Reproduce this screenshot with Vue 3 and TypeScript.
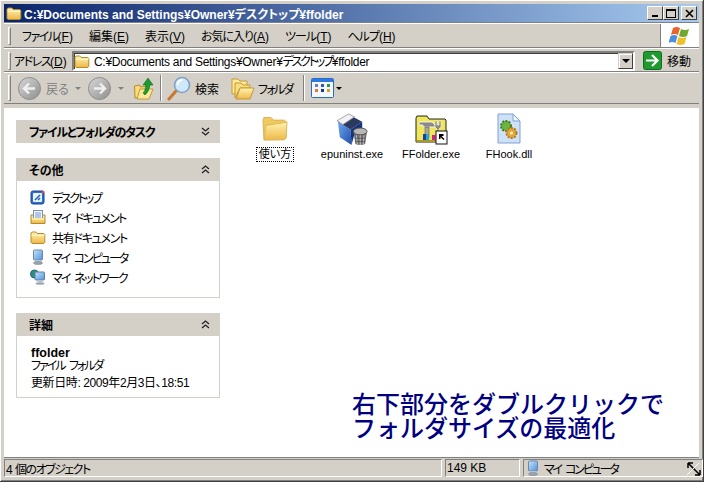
<script setup lang="ts">
interface Mnemonic {
  label: string
  key: string
  kana: boolean
}

const menus: Mnemonic[] = [
  { label: 'ファイル', key: 'F', kana: true },
  { label: '編集', key: 'E', kana: false },
  { label: '表示', key: 'V', kana: false },
  { label: 'お気に入り', key: 'A', kana: true },
  { label: 'ツール', key: 'T', kana: true },
  { label: 'ヘルプ', key: 'H', kana: true }
]

// spacing = letter-spacing each label needs to fit the narrow UI font widths
const places = [
  { icon: 'desk', label: 'デスクトップ', spacing: -2.3 },
  { icon: 'docs', label: 'マイ ドキュメント', spacing: -1.7 },
  { icon: 'folder', label: '共有ドキュメント', spacing: -1.3 },
  { icon: 'pc', label: 'マイ コンピュータ', spacing: -2 },
  { icon: 'net', label: 'マイ ネットワーク', spacing: -1.8 }
]

const files = [
  { icon: 'big-folder', label: '使い方', focused: true },
  { icon: 'box', label: 'epuninst.exe', focused: false },
  { icon: 'tool', label: 'FFolder.exe', focused: false },
  { icon: 'dll', label: 'FHook.dll', focused: false }
]

const pathHead = 'C:¥Documents and Settings¥Owner¥'
const pathKana = 'デスクトップ'
const pathTail = '¥ffolder'
</script>

<template>
  <svg class="defs" width="0" height="0">
    <defs>
      <linearGradient id="fy" x1="0" y1="0" x2="0" y2="1">
        <stop offset="0" stop-color="#fff3b0" />
        <stop offset="1" stop-color="#eeb84a" />
      </linearGradient>
      <linearGradient id="gray" x1="0" y1="0" x2="1" y2="1">
        <stop offset="0" stop-color="#d8d8d8" />
        <stop offset="1" stop-color="#8e8e8e" />
      </linearGradient>
      <linearGradient id="blue" x1="0" y1="0" x2="1" y2="1">
        <stop offset="0" stop-color="#c8e4fa" />
        <stop offset="1" stop-color="#4f93dc" />
      </linearGradient>
      <linearGradient id="boxblue" x1="0" y1="0" x2="1" y2="1">
        <stop offset="0" stop-color="#6fa6ee" />
        <stop offset="1" stop-color="#1f4fb0" />
      </linearGradient>
      <symbol id="folder" viewBox="0 0 16 16">
        <path d="M1 13.500V4.200L2.200 3h3.600l1.400 1.500h6.600l1 1v8l-1 1H2z" fill="url(#fy)" stroke="#b58a2a" />
        <path d="M1.600 6.500h12.800" stroke="#fff6c8" />
      </symbol>
      <symbol id="desk" viewBox="0 0 16 16">
        <rect x="1" y="2" width="13" height="13" rx="2" fill="#2f6fd0" stroke="#1a4596" />
        <rect x="3" y="4" width="9" height="9" rx="1" fill="#e8f2fc" />
        <path d="M5 11l5-5M8 11l2-2" stroke="#2462b8" stroke-width="1.500" />
        <path d="M12 1l3 2-3 2z" fill="#e0553a" />
      </symbol>
      <symbol id="docs" viewBox="0 0 16 16">
        <path d="M1 14.500V6h14v8.500z" fill="url(#fy)" stroke="#b58a2a" />
        <rect x="3.500" y="1.500" width="9" height="9" fill="#f3f7fd" stroke="#7f8fa8" />
        <path d="M5 4h6M5 6h6M5 8h6" stroke="#6a9ad8" />
        <path d="M2 9h12v2H2z" fill="#ffe9a0" />
      </symbol>
      <symbol id="pc" viewBox="0 0 16 16">
        <rect x="3.500" y="1" width="9" height="10" rx="1" fill="url(#blue)" stroke="#6c87a8" />
        <path d="M4 11l1 2h7l-1-2z" fill="#bcc4cc" />
        <ellipse cx="8" cy="14" rx="4.500" ry="1.500" fill="#9ca4b0" stroke="#747c88" stroke-width=".5" />
      </symbol>
      <symbol id="net" viewBox="0 0 16 16">
        <circle cx="4.500" cy="5" r="4" fill="#2f9a4e" stroke="#1c5ca8" />
        <path d="M2 4h3v3z" fill="#2f78d0" />
        <rect x="5" y="3" width="9.500" height="8" rx="1" fill="url(#blue)" stroke="#5a7ea8" />
        <path d="M8 11h4l1 2H7z" fill="#b8c0c8" />
        <ellipse cx="10" cy="14.500" rx="4.500" ry="1.200" fill="#9ca4b0" />
      </symbol>
      <symbol id="big-folder" viewBox="-1.500 -2 36 36">
        <path d="M4 28L3 6l1-3h8l3 3h12l2 2v18l-2 2z" fill="#efc95e" stroke="#d6b050" />
        <path d="M4.500 28.500L6 12l20-3 4-1-1 18-2 2z" fill="url(#fy)" stroke="#dcb452" />
      </symbol>
      <symbol id="box" viewBox="1 1 33 33">
        <path d="M3 10l13 8 1 16-12-8z" fill="url(#boxblue)" />
        <path d="M16 18l12-8v9l-8 4-3 11z" fill="#14337a" />
        <path d="M3 10L15 3l13 7-12 8z" fill="#2a3a60" />
        <path d="M2 9L14 2l6 3L8 13z" fill="#f2f2f2" stroke="#78808c" stroke-width=".7" />
        <path d="M19 20h14l-2 13q-5 2-10 0z" fill="#6e6e6e" />
        <ellipse cx="26" cy="20" rx="7" ry="3.500" fill="#b8b8b8" stroke="#555" />
        <path d="M22 24l1 9M26 24v10M30 24l-1 9" stroke="#c8c8c8" />
        <path d="M20.500 27h11M21 30.500h10" stroke="#444" stroke-width=".7" />
      </symbol>
      <symbol id="tool" viewBox="0 0 34 32">
        <path d="M2 29V5l1-2h10l2 3h16l1 1v22z" fill="#efe65a" stroke="#222" />
        <rect x="2.500" y="27" width="29" height="2" fill="#a89a28" />
        <path d="M5 9h13l3 3v2H9V12H5z" fill="#8a8a8a" stroke="#fff" stroke-width=".8" />
        <path d="M11 14h4v11h-4z" fill="#a8a8a8" stroke="#444" stroke-width=".5" />
        <path d="M21 8h2v4h2V8h2v6l-2 2v9h-2v-9l-2-2z" fill="#8c8c8c" stroke="#fff" stroke-width=".5" />
        <rect x="9" y="21" width="3" height="6" fill="#1a3ea8" />
        <rect x="12" y="21" width="3" height="6" fill="#28a8d0" />
        <rect x="18" y="22" width="3.500" height="5" fill="#d8208c" />
        <rect x="22" y="18" width="11" height="13" fill="#fff" stroke="#111" />
        <path d="M25 21v5h1.500v-2l3 3 1-1-3-3h2v-2z" fill="#000" />
      </symbol>
      <symbol id="dll" viewBox="0 0 28 32">
        <path d="M3 1h15l7 7v22H3z" fill="#cfe1f7" stroke="#7fa3d4" />
        <path d="M18 1v7h7z" fill="#eef6ff" stroke="#7fa3d4" />
        <circle cx="11" cy="13" r="5" fill="#6db33f" stroke="#3f7f24" stroke-dasharray="2 1.200" stroke-width="2" />
        <circle cx="16.500" cy="20" r="5" fill="#e2a93a" stroke="#b27a20" stroke-dasharray="2 1.200" stroke-width="2" />
        <circle cx="16.500" cy="20" r="1.500" fill="#fff3c8" />
      </symbol>
    </defs>
  </svg>

  <div class="window">
    <header class="title">
      <svg class="title-icon"><use href="#folder" /></svg>
      <span class="title-text">{{ pathHead }}<span>{{ pathKana }}</span>{{ pathTail }}</span>
      <div class="caption-btns">
        <button class="cap"><i class="min" /></button>
        <button class="cap"><i class="max" /></button>
        <button class="cap close">
          <svg width="9" height="9" viewBox="0 0 9 9"><path d="M1 1l7 7M8 1L1 8" stroke="#000" stroke-width="1.600" /></svg>
        </button>
      </div>
    </header>

    <div class="bar menubar">
      <span class="grip" />
      <nav class="menus">
        <span v-for="m in menus" :key="m.key" class="menu"><span :class="{ ja: m.kana, tight: m.key === 'F' }">{{ m.label }}</span>(<u>{{ m.key }}</u>)</span>
      </nav>
      <div class="logo">
        <svg width="22" height="20" viewBox="0 0 22 20">
          <path d="M4 2q4-2 7 0l-2 7q-3-2-7 0z" fill="#e8642c" />
          <path d="M12 3q4 2 8 0l-2 7q-4 2-8 0z" fill="#6ea82e" />
          <path d="M1.500 10q4-2 7 0l-2 7q-3-2-7 0z" fill="#4a8ee0" />
          <path d="M9.500 11q4 2 8 0l-2 7q-4 2-8 0z" fill="#f0c02c" />
        </svg>
      </div>
    </div>

    <div class="bar addressbar">
      <span class="grip" />
      <span class="addr-label"><span class="ja tight">アドレス</span>(<u>D</u>)</span>
      <div class="addr-field">
        <svg class="small"><use href="#folder" /></svg>
        <span class="addr-text">{{ pathHead }}<span class="addr-kana">{{ pathKana }}</span>{{ pathTail }}</span>
        <button class="combo"><i class="caret" /></button>
      </div>
      <div class="go">
        <svg width="19" height="19" viewBox="0 0 19 19">
          <rect x=".5" y=".5" width="18" height="18" rx="2" fill="#1f9a2e" stroke="#0f6e1c" />
          <path d="M3 9.500h11M9 4l5.500 5.500L9 15" fill="none" stroke="#fff" stroke-width="2.200" />
        </svg>
        <span>移動</span>
      </div>
    </div>

    <div class="bar toolbar">
      <span class="grip tall" />
      <svg class="nav-btn first" width="23" height="23" viewBox="0 0 23 23">
        <circle cx="11.500" cy="11.500" r="11" fill="url(#gray)" stroke="#8c8c8c" />
        <path d="M17 11.500H7M11 6.500l-5 5 5 5" fill="none" stroke="#f0f0f0" stroke-width="2.400" />
      </svg>
      <span class="nav-text">戻る</span>
      <i class="caret dim back-caret" />
      <svg class="nav-btn fwd" width="23" height="23" viewBox="0 0 23 23">
        <circle cx="11.500" cy="11.500" r="11" fill="url(#gray)" stroke="#8c8c8c" />
        <path d="M6 11.500h10M12 6.500l5 5-5 5" fill="none" stroke="#f0f0f0" stroke-width="2.400" />
      </svg>
      <i class="caret dim fwd-caret" />
      <svg class="up" width="20" height="24" viewBox="0 0 20 24">
        <path d="M1 22l-.5-12 5-1 1 2 8-1-2 12z" fill="#f6dc7c" stroke="#b58a2a" />
        <path d="M3 23l3-10h13l-4 10z" fill="#fbe89a" stroke="#c49a34" />
        <path d="M9 17q2-1 3-8H9l5-7 5 7h-3q-1 7-5 10z" fill="#1c9a2c" stroke="#0f6e1c" stroke-width=".6" />
      </svg>
      <span class="sep" />
      <svg class="search" width="24" height="25" viewBox="0 0 24 25">
        <path d="M2 23l7-8" stroke="#c87830" stroke-width="3.200" stroke-linecap="round" />
        <circle cx="15" cy="9" r="7.500" fill="#cfe8fa" stroke="#7fa2c8" stroke-width="1.600" />
        <path d="M10.500 9a5 5 0 0 1 5-5" stroke="#fff" stroke-width="2" fill="none" />
      </svg>
      <span class="tool-text search-text">検索</span>
      <svg class="folders" width="24" height="23" viewBox="0 0 24 23">
        <path d="M1 17V2h6l2 2h7v12z" fill="#fde99c" stroke="#c49a34" />
        <path d="M4 21V6h6l2 2h7v3H9z" fill="#f8dc80" stroke="#c49a34" />
        <path d="M5 22l4-11h14l-4 11z" fill="url(#fy)" stroke="#c49a34" />
      </svg>
      <span class="tool-text folder-text">フォルダ</span>
      <span class="sep second" />
      <svg class="views" width="23" height="20" viewBox="0 0 23 20">
        <rect x=".5" y=".5" width="22" height="19" rx="1" fill="#f4f7fc" stroke="#2868c8" />
        <rect x="1" y="1" width="21" height="3" fill="#2f78dc" />
        <rect x="4" y="6" width="3" height="3" fill="#7078c8" />
        <rect x="10" y="6" width="3" height="3" fill="#3058c0" />
        <rect x="16" y="6" width="3" height="3" fill="#2a9a4c" />
        <rect x="4" y="11" width="3" height="3" fill="#e07838" />
        <rect x="10" y="11" width="3" height="3" fill="#1c3a8c" />
        <rect x="16" y="11" width="3" height="3" fill="#d8a028" />
      </svg>
      <i class="caret views-caret" />
    </div>

    <main class="content">
      <aside class="side">
        <section class="panel">
          <h3 class="panel-head">
            <span class="task-title">ファイルとフォルダのタスク</span>
            <svg class="chev" width="9" height="9" viewBox="0 0 9 9"><path d="M1 1l3.500 3L8 1M1 5l3.500 3L8 5" fill="none" stroke="#222" stroke-width="1.300" /></svg>
          </h3>
        </section>
        <section class="panel">
          <h3 class="panel-head">
            <span>その他</span>
            <svg class="chev" width="9" height="9" viewBox="0 0 9 9"><path d="M1 4l3.500-3L8 4M1 8l3.500-3L8 8" fill="none" stroke="#222" stroke-width="1.300" /></svg>
          </h3>
          <ul class="panel-body places">
            <li v-for="p in places" :key="p.label" class="place">
              <svg class="small"><use :href="'#' + p.icon" /></svg>
              <span class="place-name" :style="{ letterSpacing: p.spacing + 'px' }">{{ p.label }}</span>
            </li>
          </ul>
        </section>
        <section class="panel">
          <h3 class="panel-head">
            <span>詳細</span>
            <svg class="chev" width="9" height="9" viewBox="0 0 9 9"><path d="M1 4l3.500-3L8 4M1 8l3.500-3L8 8" fill="none" stroke="#222" stroke-width="1.300" /></svg>
          </h3>
          <div class="panel-body details">
            <strong>ffolder</strong>
            <span class="kind">ファイル フォルダ</span>
            <span class="stamp">更新日時: 2009年2月3日、18:51</span>
          </div>
        </section>
      </aside>

      <div class="files">
        <figure v-for="f in files" :key="f.label" class="file">
          <svg class="file-icon"><use :href="'#' + f.icon" /></svg>
          <figcaption :class="{ focused: f.focused }">{{ f.label }}</figcaption>
        </figure>
      </div>

      <p class="note">右下部分をダブルクリックで<br />フォルダサイズの最適化</p>
    </main>

    <footer class="status">
      <span class="cell count">4 個のオブジェクト</span>
      <span class="cell size">149 KB</span>
      <span class="cell zone">
        <svg class="small"><use href="#pc" /></svg>
        <span class="zone-name">マイ コンピュータ</span>
      </span>
      <svg class="resize" width="16" height="14" viewBox="0 0 16 14">
        <path d="M2 1l12 12M2 1v5M2 1h5M14 13V8M14 13H9" fill="none" stroke="#000" stroke-width="1.500" />
        <path d="M1 13L13 1" stroke="#fff" />
      </svg>
    </footer>
  </div>
</template>

<style scoped>
.defs {
  position: absolute;
}

.window {
  box-sizing: border-box;
  width: 704px;
  height: 482px;
  padding: 4px;
  display: flex;
  flex-direction: column;
  position: relative;
  overflow: hidden;
  background: #d4d0c8;
  border-right: 1px solid #404040;
  border-bottom: 1px solid #404040;
  box-shadow: inset 1px 1px 0 #fff, inset -1px -1px 0 #808080;
  font-family: "Liberation Sans", "Noto Sans CJK JP", sans-serif;
  font-size: 12px;
  font-feature-settings: "palt";
  color: #000;
}

.ja {
  letter-spacing: -1px;
}

.tight {
  letter-spacing: -1.500px;
}

.title {
  height: 18px;
  flex: none;
  display: flex;
  align-items: center;
  background: linear-gradient(90deg, #0a246a 0%, #a6caf0 100%);
  color: #fff;
}

.title-icon {
  width: 16px;
  height: 16px;
  margin: 0 2px;
  flex: none;
}

.title-text {
  flex: 1;
  font-weight: 700;
  white-space: nowrap;
}

.caption-btns {
  display: flex;
  margin-right: 2px;
}

.cap {
  box-sizing: border-box;
  width: 16px;
  height: 14px;
  padding: 0;
  display: flex;
  align-items: center;
  justify-content: center;
  background: #d4d0c8;
  border: 1px solid;
  border-color: #fff #404040 #404040 #fff;
}

.close {
  margin-left: 2px;
}

.min {
  width: 6px;
  height: 2px;
  margin-top: 6px;
  background: #000;
}

.max {
  box-sizing: border-box;
  width: 10px;
  height: 9px;
  border: 1px solid #000;
  border-top-width: 2px;
}

.bar {
  box-sizing: border-box;
  flex: none;
  display: flex;
  align-items: center;
  border-top: 1px solid #fff;
  box-shadow: 0 -1px 0 #808080;
}

.grip {
  box-sizing: border-box;
  width: 3px;
  height: 18px;
  margin-left: 4px;
  flex: none;
  border: 1px solid;
  border-color: #fff #808080 #808080 #fff;
}

.tall {
  height: 26px;
}

.menubar {
  height: 24px;
  margin-top: 1px;
}

.menus {
  display: flex;
  gap: 16px;
  margin-left: 11px;
  flex: 1;
}

.menu {
  white-space: nowrap;
}

.logo {
  width: 39px;
  height: 23px;
  display: flex;
  align-items: center;
  justify-content: center;
  background: #fff;
  border-left: 1px solid #808080;
  box-sizing: border-box;
}

.addressbar {
  height: 24px;
  margin-top: 1px;
}

.addr-label {
  margin-left: 3px;
  width: 57px;
  flex: none;
  white-space: nowrap;
}

.addr-field {
  box-sizing: border-box;
  width: 563px;
  height: 20px;
  display: flex;
  align-items: center;
  flex: none;
  margin-left: 1px;
  background: #fff;
  border: 2px solid;
  border-color: #808080 #fff #fff #808080;
  box-shadow: inset 1px 1px 0 #404040;
}

.small {
  width: 16px;
  height: 16px;
  flex: none;
}

.addr-text {
  flex: 1;
  margin-left: 4px;
  white-space: nowrap;
  letter-spacing: -0.300px;
}

.addr-kana {
  letter-spacing: -2.200px;
}

.combo {
  box-sizing: border-box;
  width: 15px;
  height: 16px;
  padding: 0;
  display: flex;
  align-items: center;
  justify-content: center;
  background: #d4d0c8;
  border: 1px solid;
  border-color: #d4d0c8 #404040 #404040 #d4d0c8;
  box-shadow: inset 1px 1px 0 #fff;
}

.caret {
  width: 0;
  height: 0;
  display: block;
  flex: none;
  border-left: 4px solid transparent;
  border-right: 4px solid transparent;
  border-top: 4px solid #000;
}

.go {
  display: flex;
  align-items: center;
  margin-left: 8px;
  gap: 5px;
}

.toolbar {
  height: 32px;
  border-bottom: 1px solid #808080;
}

.nav-btn.first {
  margin-left: 7px;
}

.nav-text {
  margin-left: 5px;
  color: #808080;
  width: 24px;
  white-space: nowrap;
}

.dim {
  border-left-width: 3px;
  border-right-width: 3px;
  border-top: 3px solid #808080;
}

.back-caret {
  margin-left: 5px;
}

.fwd {
  margin-left: 7px;
}

.fwd-caret {
  margin-left: 7px;
}

.up {
  margin-left: 10px;
}

.sep {
  box-sizing: border-box;
  width: 2px;
  height: 26px;
  margin-left: 6px;
  border-left: 1px solid #808080;
  border-right: 1px solid #fff;
  flex: none;
}

.search {
  margin-left: 5px;
}

.tool-text {
  white-space: nowrap;
}

.search-text {
  margin-left: 4px;
}

.folders {
  margin-left: 12px;
}

.folder-text {
  margin-left: 3px;
  width: 36px;
  letter-spacing: -1.800px;
}

.second {
  margin-left: 9px;
}

.views {
  margin-left: 6px;
}

.views-caret {
  margin-left: 2px;
  border-left-width: 3px;
  border-right-width: 3px;
  border-top-width: 3px;
}

.content {
  position: relative;
  flex: 1;
  min-height: 0;
  display: flex;
  margin-top: 3px;
  background: #fff;
  border-top: 1px solid #d4d0c8;
  border-bottom: 1px solid #808080;
}

.side {
  width: 216px;
  flex: none;
  padding: 12px 0 0 12px;
  box-sizing: border-box;
  display: flex;
  flex-direction: column;
  gap: 15px;
}

.panel {
  width: 204px;
}

.panel-head {
  box-sizing: border-box;
  height: 23px;
  margin: 0;
  padding: 0 10px 0 13px;
  display: flex;
  align-items: center;
  justify-content: space-between;
  background: #d4d0c8;
  font-size: 12px;
  font-weight: 700;
}

.task-title {
  letter-spacing: -1.250px;
}

.panel-body {
  margin: 0;
  box-sizing: border-box;
  border: 1px solid #d4d0c8;
  border-top: none;
  list-style: none;
}

.places {
  height: 117px;
  padding: 6px 0 0 13px;
}

.place {
  height: 20px;
  display: flex;
  align-items: center;
  gap: 6px;
}

.place-name {
  word-spacing: 3px;
}

.details {
  height: 62px;
  padding: 11px 0 0 14px;
  display: flex;
  flex-direction: column;
  line-height: 13px;
}

.details strong {
  font-size: 12.500px;
}

.kind {
  letter-spacing: -2px;
  word-spacing: 3px;
}

.stamp {
  margin-top: 4px;
  letter-spacing: -0.400px;
}

.files {
  flex: 1;
  padding: 5px 0 0 20px;
  display: grid;
  grid-template-columns: 70px 84px 74px 82px;
  align-content: start;
}

.file {
  margin: 0;
  display: flex;
  flex-direction: column;
  align-items: center;
}

.file-icon {
  width: 34px;
  height: 32px;
  flex: none;
}

figcaption {
  margin-top: 2px;
  padding: 0 2px;
  line-height: 13px;
  font-size: 11px;
  white-space: nowrap;
  border: 1px solid transparent;
}

.focused {
  border: 1px dotted #000;
}

.note {
  position: absolute;
  left: 348px;
  top: 283px;
  margin: 0;
  font-family: "Noto Sans CJK JP", sans-serif;
  font-feature-settings: normal;
  font-size: 24px;
  line-height: 24px;
  font-weight: 500;
  color: #000080;
  white-space: nowrap;
}

.status {
  height: 18px;
  flex: none;
  display: flex;
  align-items: stretch;
  gap: 3px;
  position: relative;
  margin-top: 1px;
  margin-right: -4px;
}

.cell {
  box-sizing: border-box;
  display: flex;
  align-items: center;
  gap: 3px;
  padding-left: 1px;
  border: 1px solid;
  border-color: #808080 #fff #fff #808080;
  white-space: nowrap;
}

.count {
  width: 438px;
  letter-spacing: -1.500px;
  word-spacing: 2px;
}

.size {
  width: 75px;
}

.zone {
  flex: 1;
}

.zone-name {
  letter-spacing: -2.200px;
  word-spacing: 3px;
}

.resize {
  position: absolute;
  right: 1px;
  bottom: 1px;
}
</style>
